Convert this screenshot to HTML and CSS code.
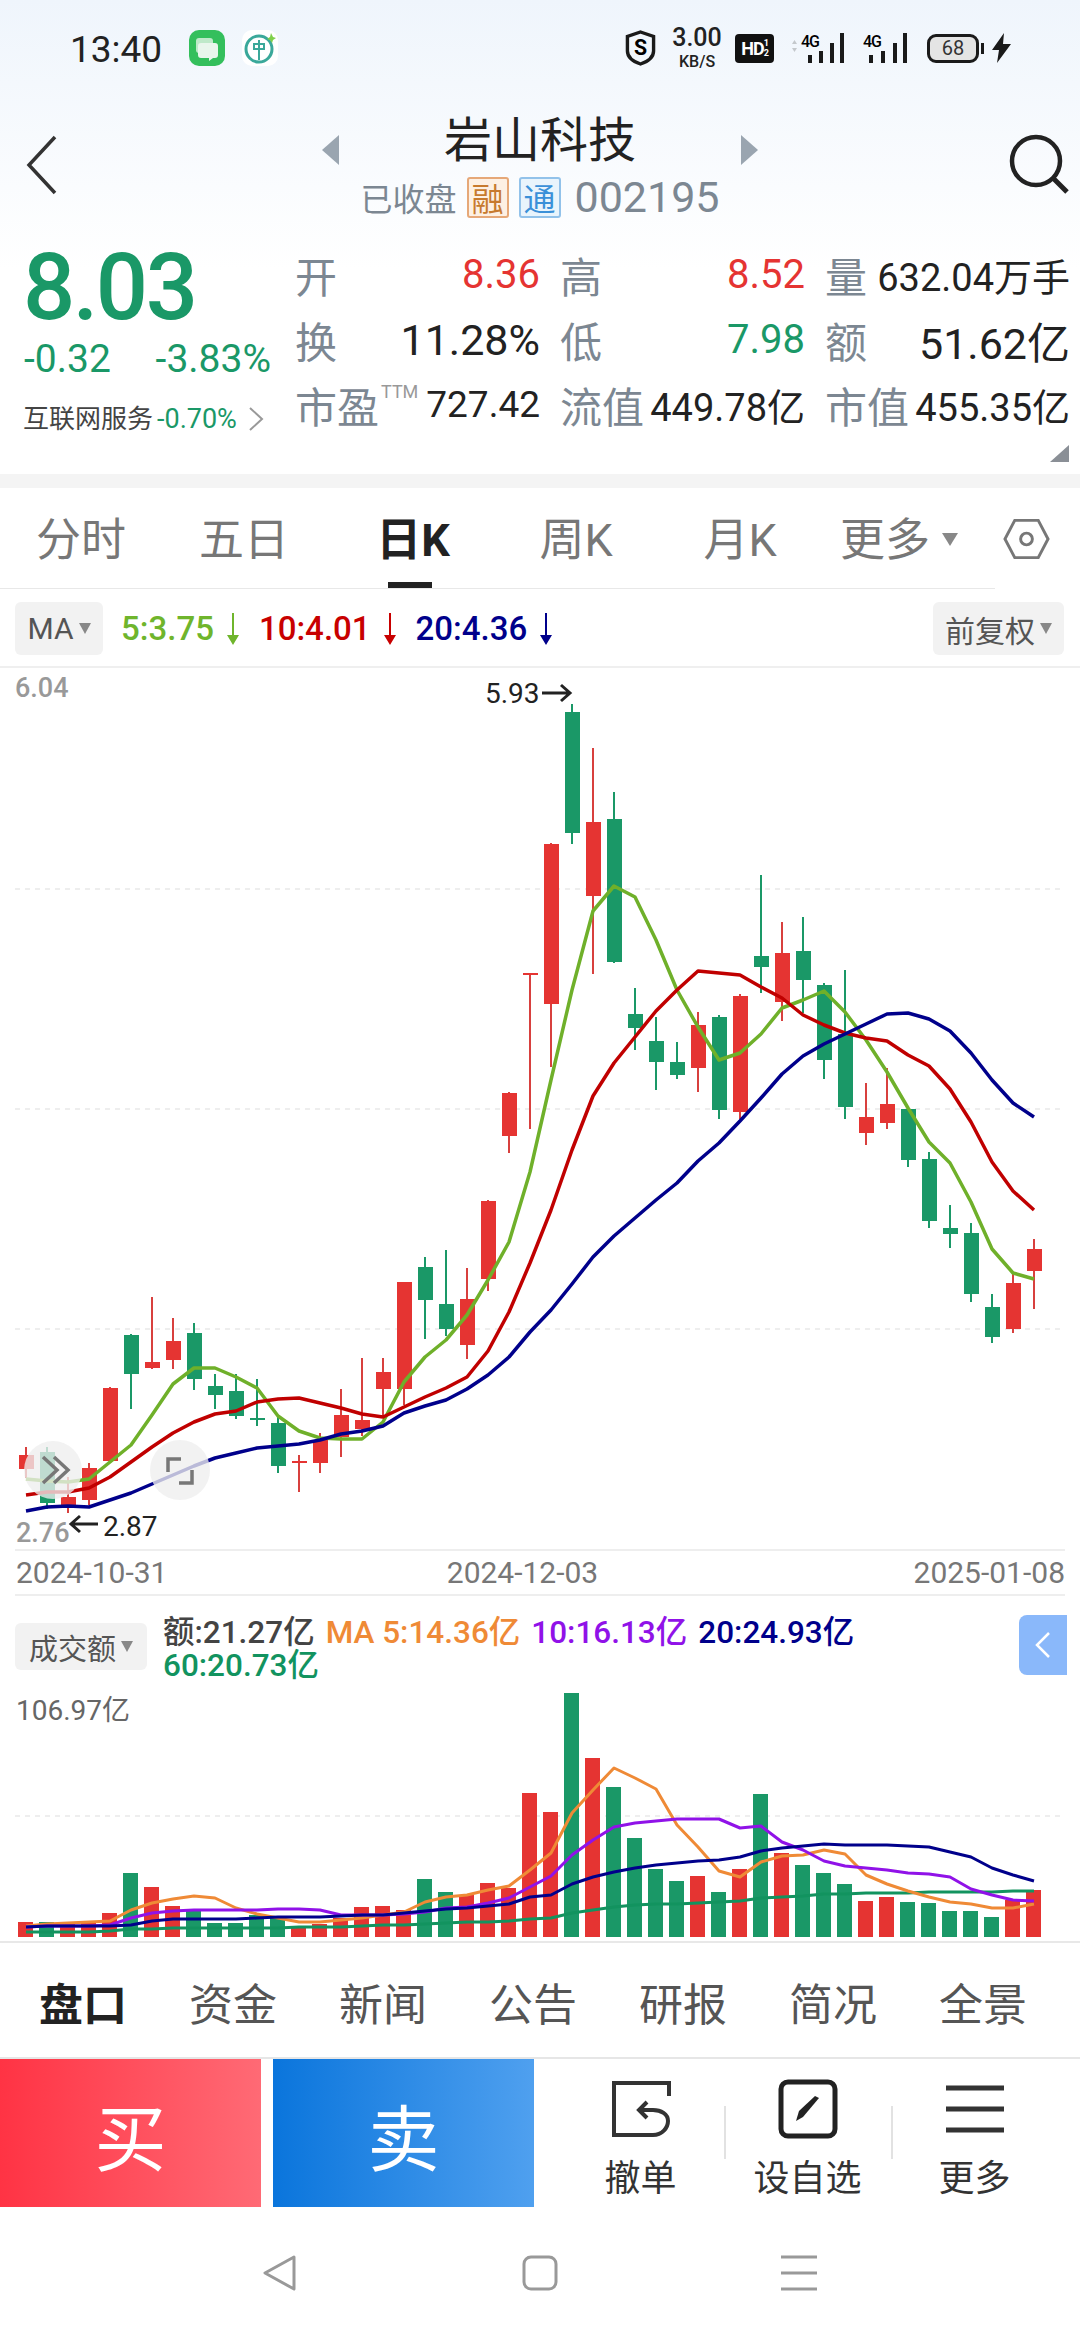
FILE: index.html
```html
<!DOCTYPE html>
<html lang="zh-CN">
<head>
<meta charset="UTF-8">
<meta name="viewport" content="width=device-width, initial-scale=1.0">
<title>岩山科技 002195</title>
<link rel="stylesheet" href="styles.css">
</head>
<body>

<div class="top">
<!-- Status bar -->
<div class="status-bar">
<div class="status-left">
<span class="clock">13:40</span>
<svg class="app-icon app-chat" viewBox="0 0 36 36"><rect width="36" height="36" rx="10" fill="#34bf5c"/><rect x="7" y="8" width="17" height="15" rx="3" fill="#bfe9c9"/><path d="M12 13h14a3 3 0 0 1 3 3v9a3 3 0 0 1-3 3h-2l-4 3v-3h-8a3 3 0 0 1-3-3v-9a3 3 0 0 1 3-3z" fill="#e9f6ec"/></svg>
<svg class="app-icon app-bank" viewBox="0 0 36 36"><rect width="36" height="36" rx="10" fill="#fff"/><circle cx="17" cy="19" r="13" fill="none" stroke="#3aa89a" stroke-width="3"/><path d="M11 14h12M11 19h12M17 10v20M12 14v5M22 14v5" fill="none" stroke="#3aa89a" stroke-width="2"/><path d="M29 3l2 4 3 1-3 2-1 3-2-3-3-1 3-2z" fill="#7ed04a"/></svg>
</div>
<div class="status-right">
<svg class="st-shield" viewBox="0 0 32 36"><path d="M16 1.500 29.500 6v15c0 6-5 10.500-13.500 13.500C7.500 31.500 2.500 27 2.500 21V6z" fill="none" stroke="#1a1a1a" stroke-width="3.500"/><text x="16" y="25" text-anchor="middle" class="st-shield-s">S</text></svg>
<div class="speed"><span>3.00</span><small>KB/S</small></div>
<div class="hd">HD<span><i>1</i><i>2</i></span></div>
<svg class="st-signal st-signal-a" viewBox="0 0 56 30"><path d="M3 11 5.500 7 8 11zM3 15 5.500 19 8 15z" fill="#c4c8cc"/><text x="12" y="14" class="st-4g">4G</text><path d="M19 22h4v8h-4zM30 18h4v12h-4zM41 10h4v20h-4zM51 0h4v30h-4z" fill="#1a1a1a"/></svg>
<svg class="st-signal st-signal-b" viewBox="0 0 46 30"><text x="0" y="14" class="st-4g">4G</text><path d="M6 22h4v8H6zM18 18h4v12h-4zM30 10h4v20h-4zM40 0h4v30h-4z" fill="#1a1a1a"/></svg>
<div class="battery"><span>68</span></div>
<svg class="st-bolt" viewBox="0 0 19 30"><path d="M12 0 0 17h7L5 30 19 11h-8z" fill="#1a1a1a"/></svg>
</div>
</div>

<!-- Title -->
<div class="title-bar">
<svg class="back-icon" viewBox="0 0 32 60"><path d="M29 2 3 30l26 28" fill="none" stroke="#333" stroke-width="3.500"/></svg>
<div class="title-center">
<div class="title-row">
<span class="tri tri-left"></span>
<span class="stock-name">岩山科技</span>
<span class="tri tri-right"></span>
</div>
<div class="sub-row">
<span>已收盘</span>
<span class="badge badge-rong">融</span>
<span class="badge badge-tong">通</span>
<span class="stock-code">002195</span>
</div>
</div>
<svg class="search-icon" viewBox="0 0 60 60"><circle cx="27" cy="27" r="24" fill="none" stroke="#222" stroke-width="4.500"/><path d="M44 44 58 58" stroke="#222" stroke-width="5"/></svg>
</div>

<!-- Quote -->
<div class="quote">
<div class="quote-left">
<div class="price">8.03</div>
<div class="change"><span>-0.32</span><span>-3.83%</span></div>
<div class="industry"><span>互联网服务</span><em>-0.70%</em><svg viewBox="0 0 16 24"><path d="M2 1 14 12 2 23" fill="none" stroke="#999" stroke-width="2"/></svg></div>
</div>
<div class="quote-table">
<div class="cell"><span class="label">开</span><span class="val up">8.36</span></div>
<div class="cell"><span class="label">高</span><span class="val up">8.52</span></div>
<div class="cell"><span class="label">量</span><span class="val tight">632.04万手</span></div>
<div class="cell"><span class="label">换</span><span class="val wide">11.28%</span></div>
<div class="cell"><span class="label">低</span><span class="val down">7.98</span></div>
<div class="cell"><span class="label">额</span><span class="val wide">51.62亿</span></div>
<div class="cell"><span class="label">市盈<sup>TTM</sup></span><span class="val pe">727.42</span></div>
<div class="cell"><span class="label">流值</span><span class="val tight">449.78亿</span></div>
<div class="cell"><span class="label">市值</span><span class="val tight">455.35亿</span></div>
</div>
<span class="corner"></span>
</div>
</div>

<div class="band"></div>

<!-- Period tabs -->
<div class="period-tabs">
<span class="ptab">分时</span>
<span class="ptab">五日</span>
<span class="ptab active">日K</span>
<span class="ptab">周K</span>
<span class="ptab">月K</span>
<span class="ptab more">更多<i class="caret caret-big"></i></span>
<svg class="hex-icon" viewBox="0 0 48 42"><path d="M12 2h24l10 19-10 19H12L2 21z" fill="none" stroke="#777" stroke-width="3"/><circle cx="24" cy="21" r="6" fill="none" stroke="#777" stroke-width="3"/></svg>
</div>

<!-- MA legend -->
<div class="ma-bar">
<div class="chip chip-ma">MA<i class="caret"></i></div>
<span class="ma ma5">5:3.75<svg viewBox="0 0 14 32"><path d="M6 0h2v22h5L7 32 1 22h5z"/></svg></span>
<span class="ma ma10">10:4.01<svg viewBox="0 0 14 32"><path d="M6 0h2v22h5L7 32 1 22h5z"/></svg></span>
<span class="ma ma20">20:4.36<svg viewBox="0 0 14 32"><path d="M6 0h2v22h5L7 32 1 22h5z"/></svg></span>
<div class="chip chip-fq">前复权<i class="caret"></i></div>
</div>

<!-- Candles, coordinates follow the page so y matches the screen -->
<svg class="kline" viewBox="0 668 1080 881">
<path class="grid" d="M15 889H1065M15 1109H1065M15 1329H1065"/>
<path class="wick-red" d="M26 1447V1478M68 1477V1513M89 1463V1505M110 1387V1462M152 1297V1369M173 1318V1369M299 1455V1492M320 1433V1473M341 1389V1457M362 1358V1436M383 1358V1418M404 1282V1405M467 1268V1359M488 1200V1291M509 1092V1153M530 974V1129M551 843V1067M593 748V974M698 1012V1092M740 994V1119M782 922V1021M866 1083V1145M887 1068V1129M1013 1273V1333M1034 1239V1309"/>
<path class="wick-green" d="M47 1447V1509M131 1334V1409M194 1323V1390M215 1374V1409M236 1374V1419M257 1379V1426M278 1417V1473M425 1257V1339M446 1250V1336M572 704V844M614 792V963M635 988V1050M656 1017V1090M677 1042V1079M719 1015V1119M761 875V993M803 917V1013M824 983V1079M845 970V1119M908 1108V1167M929 1152V1228M950 1205V1248M971 1223V1302M992 1294V1343"/>
<path class="body-red" d="M19 1455h15v14h-15zM61 1497h15v8h-15zM82 1468h15v32h-15zM103 1388h15v73h-15zM145 1362h15v6h-15zM166 1341h15v19h-15zM292 1461h15v2h-15zM313 1440h15v23h-15zM334 1415h15v22h-15zM355 1420h15v9h-15zM376 1372h15v17h-15zM397 1282h15v107h-15zM460 1299h15v46h-15zM481 1201h15v78h-15zM502 1093h15v43h-15zM523 973h15v2h-15zM544 844h15v160h-15zM586 822h15v74h-15zM691 1025h15v43h-15zM733 996h15v116h-15zM775 953h15v49h-15zM859 1117h15v16h-15zM880 1104h15v19h-15zM1006 1283h15v46h-15zM1027 1249h15v22h-15z"/>
<path class="body-green" d="M40 1452h15v51h-15zM124 1335h15v39h-15zM187 1333h15v46h-15zM208 1386h15v9h-15zM229 1391h15v25h-15zM250 1418h15v2h-15zM271 1423h15v43h-15zM418 1267h15v33h-15zM439 1304h15v25h-15zM565 712h15v121h-15zM607 819h15v143h-15zM628 1014h15v14h-15zM649 1041h15v21h-15zM670 1062h15v13h-15zM712 1017h15v93h-15zM754 956h15v11h-15zM796 951h15v29h-15zM817 985h15v75h-15zM838 1034h15v73h-15zM901 1109h15v51h-15zM922 1159h15v62h-15zM943 1228h15v6h-15zM964 1233h15v61h-15zM985 1307h15v30h-15z"/>
<polyline class="line thick l-ma5" points="26,1479 47,1481 68,1482 89,1479 110,1462 131,1445 152,1415 173,1384 194,1368 215,1368 236,1377 257,1388 278,1416 299,1431 320,1438 341,1439 362,1439 383,1422 404,1382 425,1357 446,1340 467,1315 488,1280 509,1242 530,1172 551,1080 572,990 593,911 614,886 635,897 656,940 677,990 698,1027 719,1060 740,1053 761,1034 782,1008 803,1000 824,991 845,1012 866,1040 887,1072 908,1108 929,1142 950,1163 971,1202 992,1249 1013,1273 1034,1279"/>
<polyline class="line thick l-ma10" points="26,1495 47,1492 68,1492 89,1488 110,1477 131,1462 152,1447 173,1433 194,1422 215,1414 236,1411 257,1402 278,1399 299,1398 320,1403 341,1408 362,1414 383,1417 404,1407 425,1397 446,1388 467,1377 488,1351 509,1312 530,1263 551,1210 572,1150 593,1096 614,1063 635,1037 656,1011 677,990 698,971 719,973 740,975 761,987 782,998 803,1015 824,1025 845,1033 866,1038 887,1041 908,1055 929,1066 950,1089 971,1122 992,1162 1013,1191 1034,1210"/>
<polyline class="line thick l-ma20" points="26,1511 47,1507 68,1506 89,1507 110,1500 131,1493 152,1484 173,1475 194,1466 215,1458 236,1453 257,1448 278,1446 299,1444 320,1440 341,1434 362,1431 383,1426 404,1413 425,1406 446,1400 467,1389 488,1375 509,1357 530,1332 551,1310 572,1284 593,1257 614,1236 635,1218 656,1200 677,1183 698,1161 719,1143 740,1121 761,1098 782,1074 803,1056 824,1044 845,1034 866,1024 887,1014 908,1013 929,1019 950,1031 971,1053 992,1080 1013,1103 1034,1117"/>
<text class="scale" x="15" y="697">6.04</text>
<text class="scale" x="16" y="1542">2.76</text>
<text class="peak" x="485" y="703">5.93</text>
<path class="peak-arrow" d="M542 693H570M561 685l9 8-9 8"/>
<text class="peak" x="103" y="1536">2.87</text>
<path class="peak-arrow" d="M98 1524H71M80 1516l-9 8 9 8"/>
<circle class="float-btn" cx="53" cy="1470" r="29"/>
<path class="float-mark" d="M43 1457l14 13-14 13M54 1457l14 13-14 13"/>
<circle class="float-btn" cx="180" cy="1470" r="30"/>
<path class="float-mark" d="M181 1459H168V1472M179 1483H192V1470"/>
</svg>

<div class="date-axis"><span>2024-10-31</span><span class="date-mid">2024-12-03</span><span>2025-01-08</span></div>

<!-- Volume -->
<div class="volume">
<div class="vol-head">
<div class="chip chip-vol">成交额<i class="caret"></i></div>
<div class="vol-legend">
<span class="v-now">额:21.27亿</span>
<span class="v-ma5">MA 5:14.36亿</span>
<span class="v-ma10">10:16.13亿</span>
<span class="v-ma20">20:24.93亿</span>
<span class="v-ma60">60:20.73亿</span>
</div>
</div>
<span class="vol-scale">106.97亿</span>
<div class="side-tab"><svg viewBox="0 0 16 28"><path d="M14 2 2 14l12 12" fill="none" stroke="#fff" stroke-width="2.500"/></svg></div>
<svg class="vol-chart" viewBox="0 1682 1080 260">
<path class="grid" d="M15 1816H1065"/>
<path class="body-red" d="M18 1922h15V1937h-15zM60 1923h15V1937h-15zM81 1923h15V1937h-15zM102 1913h15V1937h-15zM144 1887h15V1937h-15zM165 1906h15V1937h-15zM291 1926h15V1937h-15zM312 1924h15V1937h-15zM333 1918h15V1937h-15zM354 1907h15V1937h-15zM375 1906h15V1937h-15zM396 1910h15V1937h-15zM459 1895h15V1937h-15zM480 1883h15V1937h-15zM501 1888h15V1937h-15zM522 1793h15V1937h-15zM543 1812h15V1937h-15zM585 1758h15V1937h-15zM690 1876h15V1937h-15zM732 1869h15V1937h-15zM774 1853h15V1937h-15zM858 1901h15V1937h-15zM879 1897h15V1937h-15zM1005 1900h15V1937h-15zM1026 1890h15V1937h-15z"/>
<path class="body-green" d="M39 1922h15V1937h-15zM123 1873h15V1937h-15zM186 1910h15V1937h-15zM207 1923h15V1937h-15zM228 1923h15V1937h-15zM249 1915h15V1937h-15zM270 1917h15V1937h-15zM417 1879h15V1937h-15zM438 1892h15V1937h-15zM564 1693h15V1937h-15zM606 1787h15V1937h-15zM627 1838h15V1937h-15zM648 1869h15V1937h-15zM669 1881h15V1937h-15zM711 1892h15V1937h-15zM753 1794h15V1937h-15zM795 1865h15V1937h-15zM816 1873h15V1937h-15zM837 1884h15V1937h-15zM900 1902h15V1937h-15zM921 1903h15V1937h-15zM942 1911h15V1937h-15zM963 1911h15V1937h-15zM984 1917h15V1937h-15z"/>
<polyline class="line l-v60" points="26,1932 47,1932 68,1932 89,1932 110,1931 131,1929 152,1929 173,1928 194,1928 215,1928 236,1928 257,1928 278,1928 299,1927 320,1927 341,1927 362,1926 383,1925 404,1925 425,1924 446,1923 467,1922 488,1922 509,1921 530,1919 551,1918 572,1913 593,1910 614,1907 635,1905 656,1904 677,1904 698,1903 719,1902 740,1901 761,1898 782,1897 803,1896 824,1894 845,1894 866,1893 887,1893 908,1893 929,1892 950,1892 971,1892 992,1892 1013,1891 1034,1891"/>
<polyline class="line l-v5" points="26,1926 47,1924 68,1923 89,1922 110,1921 131,1910 152,1903 173,1899 194,1896 215,1898 236,1908 257,1914 278,1918 299,1922 320,1922 341,1920 362,1918 383,1915 404,1912 425,1902 446,1897 467,1895 488,1890 509,1886 530,1870 551,1853 572,1813 593,1790 614,1768 635,1778 656,1789 677,1825 698,1847 719,1871 740,1877 761,1862 782,1856 803,1855 824,1850 845,1854 866,1875 887,1884 908,1891 929,1897 950,1902 971,1904 992,1908 1013,1908 1034,1904"/>
<polyline class="line l-v10" points="26,1927 47,1926 68,1926 89,1926 110,1925 131,1918 152,1913 173,1911 194,1910 215,1910 236,1910 257,1910 278,1909 299,1909 320,1910 341,1915 362,1915 383,1915 404,1914 425,1912 446,1908 467,1907 488,1903 509,1898 530,1887 551,1876 572,1855 593,1840 614,1827 635,1823 656,1821 677,1819 698,1819 719,1819 740,1828 761,1826 782,1842 803,1850 824,1861 845,1866 866,1868 887,1870 908,1873 929,1874 950,1877 971,1889 992,1895 1013,1900 1034,1901"/>
<polyline class="line l-v20" points="26,1927 47,1926 68,1926 89,1926 110,1926 131,1925 152,1921 173,1919 194,1919 215,1919 236,1919 257,1918 278,1917 299,1917 320,1917 341,1916 362,1915 383,1915 404,1913 425,1911 446,1909 467,1908 488,1906 509,1904 530,1897 551,1895 572,1884 593,1877 614,1872 635,1868 656,1865 677,1863 698,1861 719,1860 740,1857 761,1851 782,1848 803,1846 824,1844 845,1845 866,1845 887,1845 908,1846 929,1847 950,1852 971,1857 992,1868 1013,1875 1034,1881"/>
</svg>
</div>

<!-- Info tabs -->
<div class="info-tabs">
<span class="itab active">盘口</span>
<span class="itab">资金</span>
<span class="itab">新闻</span>
<span class="itab">公告</span>
<span class="itab">研报</span>
<span class="itab">简况</span>
<span class="itab">全景</span>
</div>

<!-- Trade bar -->
<div class="trade-bar">
<div class="trade-btn buy">买</div>
<div class="trade-btn sell">卖</div>
<div class="actions">
<div class="action">
<div class="action-icon"><svg width="60" height="56" viewBox="0 0 60 56"><path d="M58 15V2H3V54H42C51 54 57 47 57 40C57 33 50 29 42 29H28M36 21 28 29 36 37" fill="none" stroke="#333" stroke-width="4"/></svg></div>
<span>撤单</span>
</div>
<div class="action">
<div class="action-icon"><svg width="60" height="60" viewBox="0 0 60 60"><rect x="3" y="3" width="54" height="54" rx="7" fill="none" stroke="#222" stroke-width="5"/><path d="M18 42 21 32 37 17 41 19 25 38z" fill="#222"/></svg></div>
<span>设自选</span>
</div>
<div class="action">
<div class="action-icon"><svg width="60" height="48" viewBox="0 0 60 48"><path d="M1 3H59M1 24H59M1 45H59" stroke="#333" stroke-width="5"/></svg></div>
<span>更多</span>
</div>
</div>
</div>

<!-- System nav -->
<div class="sys-nav">
<svg viewBox="0 0 36 36"><path d="M31 2 2 18l29 16z" fill="none" stroke="#999" stroke-width="3" stroke-linejoin="round"/></svg>
<svg viewBox="0 0 36 36"><rect x="2" y="2" width="32" height="32" rx="7" fill="none" stroke="#999" stroke-width="3"/></svg>
<svg viewBox="0 0 36 36"><path d="M0 2H36M0 18H36M0 34H36" stroke="#999" stroke-width="3"/></svg>
</div>

</body>
</html>
```

FILE: styles.css
```css
* {
box-sizing: border-box;
}

body {
margin: 0;
width: 1080px;
height: 2340px;
overflow: hidden;
background-color: #fff;
color: #222;
font-family: Roboto, "Noto Sans CJK SC", sans-serif;
}

svg {
display: block;
}

.top {
height: 474px;
background: linear-gradient(#eff5fc 0, #fff 270px);
}

/* Status bar */
.status-bar {
display: flex;
justify-content: space-between;
align-items: center;
height: 96px;
padding: 0 69px 0 70px;
}

.status-left {
display: flex;
align-items: center;
}

.clock {
font-size: 37px;
width: 119px;
margin-top: 2px;
color: #222;
}

.app-icon {
width: 36px;
height: 36px;
}

.app-bank {
margin-left: 17px;
}

.status-right {
display: flex;
align-items: center;
}

.st-shield {
width: 31px;
height: 36px;
}

.st-shield-s {
font-size: 22px;
font-weight: 700;
}

.speed {
display: flex;
flex-direction: column;
align-items: center;
width: 52px;
margin-left: 15px;
margin-top: -2px;
font-size: 25px;
font-weight: 500;
}

.speed span {
line-height: 29px;
}

.speed small {
font-size: 16px;
line-height: 19px;
}

.hd {
display: flex;
align-items: center;
justify-content: center;
width: 39px;
height: 29px;
margin-left: 12px;
border-radius: 4px;
background-color: #111;
color: #fff;
font-size: 18px;
font-weight: 700;
letter-spacing: -1px;
}

.hd span {
display: flex;
flex-direction: column;
font-size: 9px;
line-height: 10px;
}

.hd i {
font-style: normal;
}

.st-signal {
height: 30px;
}

.st-signal-a {
width: 56px;
margin-left: 15px;
}

.st-signal-b {
width: 46px;
margin-left: 18px;
}

.st-4g {
font-size: 16px;
font-weight: 500;
letter-spacing: -1px;
}

.battery {
position: relative;
display: flex;
align-items: center;
justify-content: center;
width: 52px;
height: 29px;
margin-left: 18px;
border: 3px solid #1a1a1a;
border-radius: 9px;
background-color: #e4e4e4;
font-size: 20px;
color: #333;
}

.battery::after {
content: "";
position: absolute;
right: -8px;
top: 6px;
width: 3px;
height: 11px;
background-color: #1a1a1a;
}

.st-bolt {
width: 19px;
height: 30px;
margin-left: 13px;
}

/* Title */
.title-bar {
display: grid;
grid-template-columns: 1fr auto 1fr;
height: 136px;
padding: 0 13px;
}

.back-icon {
width: 32px;
height: 60px;
margin: 39px 0 0 13px;
}

.search-icon {
width: 60px;
height: 60px;
margin: 38px -2px 0 0;
justify-self: end;
}

.title-center {
display: flex;
flex-direction: column;
align-items: center;
padding-top: 17px;
}

.title-row {
display: flex;
align-items: center;
gap: 105px;
font-size: 48px;
line-height: 56px;
}

.tri {
margin-top: 17px;
border-top: 15px solid transparent;
border-bottom: 15px solid transparent;
}

.tri-left {
border-right: 17px solid #9aa5b0;
}

.tri-right {
border-left: 17px solid #9aa5b0;
}

.sub-row {
display: flex;
align-items: center;
margin-top: 7px;
height: 42px;
font-size: 32px;
color: #7c8792;
}

.badge {
display: flex;
align-items: center;
justify-content: center;
width: 42px;
height: 41px;
border-radius: 3px;
border: 2px solid;
font-size: 32px;
}

.badge-rong {
margin-left: 10px;
border-color: #e6a878;
background-color: #fdf0e3;
color: #c77a2e;
}

.badge-tong {
margin-left: 10px;
border-color: #92c2ea;
background-color: #e9f4fc;
color: #3a90d8;
}

.stock-code {
margin-left: 14px;
font-size: 43px;
}

/* Quote */
.quote {
position: relative;
display: flex;
height: 242px;
padding-top: 10px;
}

.quote-left {
width: 295px;
padding: 6px 0 0 23px;
color: #1a9867;
}

.price {
font-size: 92px;
line-height: 80px;
font-weight: 500;
letter-spacing: -2.500px;
}

.change {
display: flex;
justify-content: space-between;
width: 247px;
margin: 11px 0 0 1px;
font-size: 39px;
line-height: 40px;
}

.industry {
display: flex;
align-items: center;
margin-top: 24px;
font-size: 26px;
line-height: 32px;
color: #444;
}

.industry em {
margin-left: 4px;
font-size: 27px;
font-style: normal;
color: #1a9867;
}

.industry svg {
width: 16px;
height: 24px;
margin-left: 11px;
}

.quote-table {
display: grid;
grid-template-columns: repeat(3, 245px);
grid-auto-rows: 65px;
column-gap: 20px;
}

.cell {
display: flex;
justify-content: space-between;
align-items: center;
white-space: nowrap;
}

.label {
position: relative;
font-size: 42px;
color: #7c8792;
}

.label sup {
position: absolute;
left: 86px;
top: 8px;
font-size: 18px;
line-height: 20px;
color: #999;
}

.val {
font-size: 40px;
color: #222;
}

.val.tight {
font-size: 38px;
}

.val.pe {
font-size: 37px;
}

.val.wide {
font-size: 43px;
}

.val.up {
color: #e53432;
}

.val.down {
color: #1a9867;
}

.corner {
position: absolute;
right: 11px;
bottom: 12px;
width: 0;
height: 0;
border-left: 19px solid transparent;
border-bottom: 17px solid #8a8f96;
}

.band {
height: 14px;
background-color: #f4f4f4;
}

/* Period tabs */
.period-tabs {
position: relative;
display: grid;
grid-template-columns: 162px 164px 174px 152px 176px auto;
align-items: start;
height: 101px;
}

.period-tabs::after {
content: "";
position: absolute;
left: 0;
bottom: 0;
width: 995px;
height: 1px;
background-color: #e8e8e8;
}

.ptab {
position: relative;
text-align: center;
font-size: 45px;
line-height: 106px;
color: #777;
}

.ptab.active {
font-weight: 700;
color: #222;
}

.ptab.active::after {
content: "";
position: absolute;
left: 50%;
bottom: 6px;
width: 44px;
height: 6px;
margin-left: -25px;
background-color: #222;
z-index: 1;
}

.ptab.more {
display: flex;
align-items: center;
padding-left: 12px;
}

.hex-icon {
position: absolute;
right: 30px;
top: 30px;
width: 47px;
height: 42px;
}

.caret {
display: inline-block;
margin-left: 5px;
border-left: 6px solid transparent;
border-right: 6px solid transparent;
border-top: 11px solid #888;
}

.caret-big {
margin-left: 12px;
margin-bottom: 4px;
border-left-width: 8px;
border-right-width: 8px;
border-top-width: 13px;
}

/* MA legend */
.ma-bar {
display: flex;
align-items: center;
height: 79px;
padding: 2px 16px 0 15px;
border-bottom: 2px solid #efefef;
}

.chip {
display: flex;
align-items: center;
justify-content: center;
border-radius: 6px;
background-color: #f2f2f2;
color: #555;
white-space: nowrap;
}

.chip-ma {
width: 88px;
height: 53px;
font-size: 30px;
margin-right: 18px;
}

.chip-fq {
width: 131px;
height: 53px;
margin-left: auto;
font-size: 30px;
}

.ma {
display: flex;
align-items: center;
font-size: 33px;
font-weight: 500;
margin-right: 19px;
}

.ma svg {
width: 14px;
height: 32px;
margin-left: 12px;
fill: currentColor;
}

.ma5 {
color: #6fb52c;
}

.ma10 {
color: #c80000;
}

.ma20 {
color: #00008b;
}

/* Charts */
.kline {
width: 1080px;
height: 881px;
}

.vol-chart {
width: 1080px;
height: 260px;
}

.grid {
fill: none;
stroke: #eee;
stroke-width: 2;
stroke-dasharray: 5 5;
}

.wick-red {
fill: none;
stroke: #d8403e;
stroke-width: 2;
}

.wick-green {
fill: none;
stroke: #1a9867;
stroke-width: 2;
}

.body-red {
fill: #e53432;
}

.body-green {
fill: #1a9867;
}

.line {
fill: none;
stroke-width: 3;
stroke-linejoin: round;
}

.line.thick {
stroke-width: 3.500;
}

.l-ma5 {
stroke: #6fb02a;
}

.l-ma10 {
stroke: #c00000;
}

.l-ma20 {
stroke: #00008b;
}

.l-v5 {
stroke: #ef8a36;
}

.l-v10 {
stroke: #9012e8;
}

.l-v20 {
stroke: #00008b;
}

.l-v60 {
stroke: #12935f;
}

.scale {
font-size: 27px;
font-weight: 500;
fill: #999;
}

.peak {
font-size: 28px;
fill: #222;
}

.peak-arrow {
fill: none;
stroke: #222;
stroke-width: 3;
}

.float-btn {
fill: rgba(238, 238, 238, 0.78);
}

.float-mark {
fill: none;
stroke: #777;
stroke-width: 3.500;
}

.date-axis {
display: flex;
justify-content: space-between;
height: 47px;
margin: 0 15px;
padding: 0 0 0 1px;
border-top: 2px solid #eee;
border-bottom: 2px solid #eee;
font-size: 30px;
line-height: 43px;
color: #777;
}

.date-mid {
margin-right: 36px;
}

/* Volume */
.volume {
position: relative;
height: 345px;
}

.vol-head {
display: flex;
height: 86px;
padding: 20px 0 0 15px;
}

.chip-vol {
width: 132px;
height: 47px;
margin-top: 7px;
font-size: 29px;
}

.vol-legend {
display: flex;
flex-wrap: wrap;
column-gap: 11px;
width: 720px;
margin-left: 16px;
font-size: 31.500px;
line-height: 33px;
font-weight: 500;
}

.v-now {
color: #444;
}

.v-ma5 {
color: #ef8a36;
}

.v-ma10 {
color: #9012e8;
}

.v-ma20 {
color: #00008b;
}

.v-ma60 {
color: #12935f;
}

.vol-scale {
position: absolute;
left: 16px;
top: 97px;
font-size: 28px;
line-height: 36px;
color: #666;
}

.side-tab {
position: absolute;
left: 1019px;
top: 19px;
display: flex;
align-items: center;
justify-content: center;
width: 48px;
height: 60px;
border-radius: 8px 0 0 8px;
background-color: #8ab8fa;
}

.side-tab svg {
width: 16px;
height: 28px;
}

/* Info tabs */
.info-tabs {
display: grid;
grid-template-columns: repeat(7, 150px);
align-items: center;
height: 118px;
padding: 4px 0 0 8px;
border-top: 2px solid #e8e8e8;
border-bottom: 2px solid #e6e6e6;
}

.itab {
text-align: center;
font-size: 44px;
color: #555;
}

.itab.active {
font-weight: 700;
color: #222;
}

/* Trade bar */
.trade-bar {
display: flex;
height: 148px;
}

.trade-btn {
display: flex;
align-items: center;
justify-content: center;
width: 261px;
font-size: 72px;
color: #fff;
}

.buy {
background: linear-gradient(to right, #ff3344, #ff6a75);
}

.sell {
margin-left: 12px;
background: linear-gradient(to right, #0a75dc, #4fa0ef);
}

.actions {
display: grid;
grid-template-columns: repeat(3, 167px);
padding-left: 23px;
}

.action {
position: relative;
display: flex;
flex-direction: column;
align-items: center;
font-size: 36px;
line-height: 40px;
color: #333;
}

.action + .action::before {
content: "";
position: absolute;
left: 0;
top: 47px;
width: 2px;
height: 53px;
background-color: #e2e2e2;
}

.action-icon {
display: flex;
align-items: center;
justify-content: center;
height: 100px;
}

/* System nav */
.sys-nav {
display: flex;
align-items: center;
justify-content: center;
gap: 223px;
height: 132px;
}

.sys-nav svg {
width: 36px;
height: 36px;
}
```
